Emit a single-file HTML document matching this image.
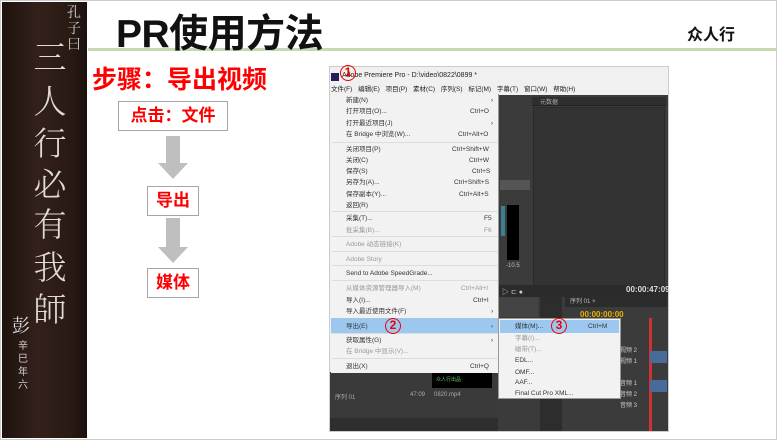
<!DOCTYPE html>
<html><head><meta charset="utf-8"><style>
*{margin:0;padding:0;box-sizing:border-box}
body{width:777px;height:440px;background:#fff;position:relative;overflow:hidden;font-family:"Liberation Sans","Noto Sans CJK SC",sans-serif}
.a{position:absolute}
.cal{position:absolute;color:#e0dcd4;font-family:"Noto Serif CJK SC",serif;font-size:33px;line-height:36px;left:30px;width:40px;text-align:center;font-weight:300}
.red{color:#f00;font-weight:bold}
.box{position:absolute;border:1px solid #a6a6a6;background:#fff;color:#f00;font-weight:bold;font-size:17px;text-align:center}
.mi{position:absolute;left:346px;font-size:6.5px;line-height:9px;color:#333;white-space:nowrap}
.g{color:#999}
.sep{position:absolute;left:332px;width:166px;height:1px;background:#ddd}
.circ{position:absolute;width:16px;height:16px;border:1.5px solid #e00;border-radius:50%;color:#e00;font-weight:bold;font-size:12px;line-height:13px;text-align:center}
</style></head><body>
<div class="a" style="left:0;top:0;width:777px;height:440px;border:1px solid #ccc"></div>
<div class="a" style="left:2px;top:2px;width:85px;height:436px;background:linear-gradient(90deg,#1e120e,#33201a 40%,#2a1a14 80%,#1c110d)"></div>
<div class="a" style="left:64px;top:4px;width:20px;color:#ccc;font-family:'Noto Serif CJK SC',serif;font-size:14px;line-height:16px;text-align:center">孔<br>子<br>曰</div>
<div class="cal" style="top:38px">三</div>
<div class="cal" style="top:82px">人</div>
<div class="cal" style="top:124px">行</div>
<div class="cal" style="top:165px">必</div>
<div class="cal" style="top:205px">有</div>
<div class="cal" style="top:248px">我</div>
<div class="cal" style="top:290px">師</div>
<div class="a" style="left:12px;top:312px;color:#ddd;font-size:18px;font-family:'Noto Serif CJK SC',serif">彭</div>
<div class="a" style="left:16px;top:340px;width:14px;color:#ccc;font-size:10px;line-height:13px;text-align:center">辛<br>巳<br>年<br>六</div>

<div class="a" style="left:88px;top:48px;width:689px;height:3px;background:#c6d9b4"></div>
<div class="a" style="left:116px;top:3px;font-size:39px;font-weight:bold;color:#111;letter-spacing:-0.5px">PR使用方法</div>
<div class="a" style="left:687px;top:21px;font-size:16px;font-weight:bold;color:#111">众人行</div>
<div class="a red" style="left:92px;top:60px;font-size:25px">步骤：导出视频</div>

<div class="box" style="left:118px;top:101px;width:110px;height:30px;line-height:28px">点击：文件</div>
<div class="a" style="left:166px;top:136px;width:14px;height:27px;background:#bfbfbf"></div>
<div class="a" style="left:158px;top:163px;width:0;height:0;border-left:15px solid transparent;border-right:15px solid transparent;border-top:16px solid #bfbfbf"></div>
<div class="box" style="left:147px;top:186px;width:52px;height:30px;line-height:28px">导出</div>
<div class="a" style="left:166px;top:218px;width:14px;height:29px;background:#bfbfbf"></div>
<div class="a" style="left:158px;top:247px;width:0;height:0;border-left:15px solid transparent;border-right:15px solid transparent;border-top:16px solid #bfbfbf"></div>
<div class="box" style="left:147px;top:268px;width:52px;height:30px;line-height:28px">媒体</div>

<div class="a" style="left:329px;top:66px;width:340px;height:366px;background:#f0f0f0;border:1px solid #ccc"></div>
<div class="a" style="left:331px;top:73px;width:8px;height:8px;background:#2a1a5e"></div>
<div class="a" style="left:342px;top:72px;font-size:7px;color:#222">Adobe Premiere Pro - D:\video\0822\0899 *</div>
<div class="a" style="left:331px;top:85px;font-size:6.5px;line-height:9px;color:#222;word-spacing:4px">文件(F) 编辑(E) 项目(P) 素材(C) 序列(S) 标记(M) 字幕(T) 窗口(W) 帮助(H)</div>
<div class="a" style="left:498px;top:95px;width:170px;height:336px;background:#3b3b3b"></div>
<div class="a" style="left:532px;top:97px;width:134px;height:9px;background:#2e2e2e;border-bottom:1px solid #222"></div>
<div class="a" style="left:540px;top:97px;font-size:6px;color:#aaa">元数据</div>
<div class="a" style="left:533px;top:107px;width:132px;height:180px;background:#333;border:1px solid #2a2a2a"></div>
<div class="a" style="left:500px;top:180px;width:30px;height:10px;background:#555"></div>
<div class="a" style="left:507px;top:205px;width:12px;height:55px;background:#000"></div>
<div class="a" style="left:501px;top:206px;width:4px;height:30px;background:#3a8090"></div>
<div class="a" style="left:506px;top:263px;font-size:6px;color:#bbb">-10.5</div>
<div class="a" style="left:498px;top:285px;width:170px;height:12px;background:#2b2b2b"></div>
<div class="a" style="left:502px;top:287px;font-size:7px;color:#ccc">▷ ⊏ ●</div>
<div class="a" style="left:626px;top:285px;font-size:8px;color:#ddd;font-weight:bold">00:00:47:09</div>
<div class="a" style="left:498px;top:297px;width:40px;height:20px;background:#444"></div>
<div class="a" style="left:540px;top:297px;width:22px;height:134px;background:#2d2d2d"></div>
<div class="a" style="left:565px;top:295px;width:102px;height:12px;background:#2c2c2c"></div>
<div class="a" style="left:570px;top:296px;font-size:6px;color:#bbb">序列 01 ×</div>
<div class="a" style="left:580px;top:310px;font-size:8px;color:#e8b400;font-weight:bold">00:00:00:00</div>
<div class="a" style="left:649px;top:318px;width:3px;height:113px;background:#c33"></div>
<div class="a" style="left:650px;top:351px;width:17px;height:12px;background:#4a6a9a"></div>
<div class="a" style="left:650px;top:380px;width:17px;height:12px;background:#4a6a9a"></div>
<div class="a" style="left:620px;top:346px;font-size:6px;color:#ccc;line-height:11px">视频 2<br>视频 1<br><br>音频 1<br>音频 2<br>音频 3</div>
<div class="a" style="left:330px;top:372px;width:168px;height:59px;background:#3a3a3a"></div>
<div class="a" style="left:432px;top:373px;width:60px;height:15px;background:#000"></div>
<div class="a" style="left:436px;top:376px;font-size:5px;color:#6c6">众人行出品</div>
<div class="a" style="left:335px;top:392px;font-size:6px;color:#aaa">序列 01</div>
<div class="a" style="left:410px;top:392px;font-size:6px;color:#aaa">47:09</div>
<div class="a" style="left:434px;top:392px;font-size:6px;color:#aaa">0820.mp4</div>
<div class="a" style="left:330px;top:418px;width:168px;height:13px;background:#2e2e2e"></div>
<div class="a" style="left:331px;top:94px;width:168px;height:279px;background:#f2f2f2;border-right:1px solid #999"></div>
<div class="a" style="left:331px;top:318px;width:167px;height:15px;background:#9cc8f0"></div>
<div class="mi" style="top:96px">新建(N)</div><div class="mi" style="top:96px;left:491px">›</div>
<div class="mi" style="top:107px">打开项目(O)...</div><div class="mi" style="top:107px;left:470px">Ctrl+O</div>
<div class="mi" style="top:119px">打开最近项目(J)</div><div class="mi" style="top:119px;left:491px">›</div>
<div class="mi" style="top:130px">在 Bridge 中浏览(W)...</div><div class="mi" style="top:130px;left:458px">Ctrl+Alt+O</div>
<div class="sep" style="top:142px"></div>
<div class="mi" style="top:145px">关闭项目(P)</div><div class="mi" style="top:145px;left:452px">Ctrl+Shift+W</div>
<div class="mi" style="top:156px">关闭(C)</div><div class="mi" style="top:156px;left:469px">Ctrl+W</div>
<div class="mi" style="top:167px">保存(S)</div><div class="mi" style="top:167px;left:472px">Ctrl+S</div>
<div class="mi" style="top:178px">另存为(A)...</div><div class="mi" style="top:178px;left:454px">Ctrl+Shift+S</div>
<div class="mi" style="top:190px">保存副本(Y)...</div><div class="mi" style="top:190px;left:459px">Ctrl+Alt+S</div>
<div class="mi" style="top:201px">返回(R)</div>
<div class="sep" style="top:211px"></div>
<div class="mi" style="top:214px">采集(T)...</div><div class="mi" style="top:214px;left:484px">F5</div>
<div class="mi g" style="top:226px">批采集(B)...</div><div class="mi g" style="top:226px;left:484px">F6</div>
<div class="sep" style="top:236px"></div>
<div class="mi g" style="top:240px">Adobe 动态链接(K)</div>
<div class="sep" style="top:251px"></div>
<div class="mi g" style="top:255px">Adobe Story</div>
<div class="sep" style="top:265px"></div>
<div class="mi" style="top:269px">Send to Adobe SpeedGrade...</div>
<div class="sep" style="top:280px"></div>
<div class="mi g" style="top:284px">从媒体资源管理器导入(M)</div><div class="mi g" style="top:284px;left:461px">Ctrl+Alt+I</div>
<div class="mi" style="top:296px">导入(I)...</div><div class="mi" style="top:296px;left:473px">Ctrl+I</div>
<div class="mi" style="top:307px">导入最近使用文件(F)</div><div class="mi" style="top:307px;left:491px">›</div>
<div class="mi" style="top:322px">导出(E)</div><div class="mi" style="top:322px;left:491px">›</div>
<div class="sep" style="top:333px"></div>
<div class="mi" style="top:336px">获取属性(G)</div><div class="mi" style="top:336px;left:491px">›</div>
<div class="mi g" style="top:347px">在 Bridge 中显示(V)...</div>
<div class="sep" style="top:358px"></div>
<div class="mi" style="top:362px">退出(X)</div><div class="mi" style="top:362px;left:470px">Ctrl+Q</div>
<div class="a" style="left:498px;top:318px;width:123px;height:81px;background:#f2f2f2;border:1px solid #999"></div>
<div class="a" style="left:500px;top:320px;width:119px;height:13px;background:#9cc8f0"></div>
<div class="mi" style="left:515px;top:322px">媒体(M)...</div><div class="mi" style="left:588px;top:322px">Ctrl+M</div>
<div class="mi g" style="left:515px;top:334px">字幕(I)...</div>
<div class="mi g" style="left:515px;top:345px">磁带(T)...</div>
<div class="mi" style="left:515px;top:356px">EDL...</div>
<div class="mi" style="left:515px;top:368px">OMF...</div>
<div class="mi" style="left:515px;top:378px">AAF...</div>
<div class="mi" style="left:515px;top:389px">Final Cut Pro XML...</div>
<div class="circ" style="left:340px;top:65px">1</div>
<div class="circ" style="left:385px;top:318px">2</div>
<div class="circ" style="left:551px;top:318px">3</div>
</body></html>
